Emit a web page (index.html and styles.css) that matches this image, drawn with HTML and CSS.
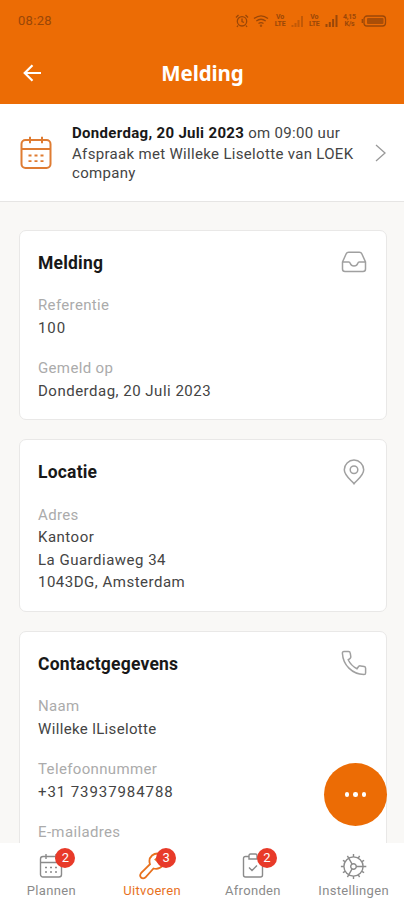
FILE: index.html
```
<!DOCTYPE html>
<html lang="nl">
<head>
<meta charset="utf-8">
<meta name="viewport" content="width=device-width, initial-scale=1">
<title>Melding</title>
<link rel="stylesheet" href="styles.css">
</head>
<body>
<div class="app">
  <header class="top">
    <div class="status">
      <span class="clock">08:28</span>
      <div class="indicators">
        <svg width="14" height="14" viewBox="0 0 14 14"><circle cx="7" cy="7.3" r="4.7"/><path d="M7 4.500v3l2 1M1 3.500 3.500 1M13 3.500 10.500 1M3 11.500 2 13M11 11.500 12 13"/></svg>
        <svg width="16" height="14" viewBox="0 0 16 14"><path d="M1 4.500Q8-.8 15 4.500M3.300 7Q8 3.500 12.700 7M5.500 9.500Q8 7.600 10.500 9.500"/><circle class="solid" cx="8" cy="11.800" r="1.200"/></svg>
        <span class="lte">Vo<br>LTE</span>
        <svg class="dim" width="13" height="12" viewBox="0 0 13 12"><path class="bars" d="M1.500 12V10M4.500 12V8M7.500 12V5M11 12V1"/></svg>
        <span class="lte">Vo<br>LTE</span>
        <svg width="13" height="12" viewBox="0 0 13 12"><path class="bars" d="M1.500 12V9M4.800 12V7M8.100 12V4M11.500 12V0"/></svg>
        <span class="lte rate">4,15<br>K/s</span>
        <svg width="26" height="12" viewBox="0 0 26 12"><rect x="3" y="1" width="21.500" height="10" rx="3"/><path d="M1.300 4v4"/><rect class="solid" x="6" y="3" width="16.500" height="6" rx="1"/></svg>
      </div>
    </div>
    <div class="bar">
      <svg class="back" width="20" height="18" viewBox="0 0 20 18"><path d="M18 9H2M9.500 1.200 1.700 9l7.800 7.800"/></svg>
      <h1>Melding</h1>
    </div>
  </header>

  <section class="appointment">
    <svg class="calendar" width="32" height="34" viewBox="0 0 32 34"><rect x="1.500" y="4" width="29" height="28" rx="4"/><path d="M1.500 13h29M10 .8v6.400M22 .8v6.400"/><path class="dots" d="M8.500 19.500h3M14.500 19.500h3M20.500 19.500h3M8.500 25.200h3M14.500 25.200h3M20.500 25.200h3"/></svg>
    <div class="summary">
      <div class="when"><b>Donderdag, 20 Juli 2023</b> <span>om 09:00 uur</span></div>
      <div class="with">Afspraak met Willeke Liselotte van LOEK</div>
      <div class="company">company</div>
    </div>
    <svg class="chevron" width="11" height="18" viewBox="0 0 11 18"><path d="m1 1 9 8-9 8"/></svg>
  </section>

  <main class="content">
    <article class="card">
      <div class="head"><h2>Melding</h2>
        <svg class="icon" width="26" height="22" viewBox="0 0 26 22"><path d="M1.500 11 5.200 2.800Q5.900 1.200 7.600 1.200h10.800q1.700 0 2.400 1.600L24.500 11v7q0 2.500-2.500 2.500H4q-2.500 0-2.500-2.500zM1.500 11h6.300q1 0 1.500 1.500.8 2.500 3.700 2.500t3.700-2.500q.5-1.500 1.500-1.500h6.300"/></svg>
      </div>
      <dl><dt>Referentie</dt><dd class="digits">100</dd></dl>
      <dl><dt>Gemeld op</dt><dd>Donderdag, 20 Juli 2023</dd></dl>
    </article>
    <article class="card">
      <div class="head"><h2>Locatie</h2>
        <svg class="icon pin" width="22" height="26" viewBox="0 0 22 26"><path d="M11 24.700C9 21.800 1.300 17 1.300 10.800a9.700 9.700 0 0 1 19.400 0C20.700 17 13 21.800 11 24.700z"/><circle cx="11" cy="10.800" r="3.800"/></svg>
      </div>
      <dl><dt>Adres</dt><dd>Kantoor</dd><dd>La Guardiaweg 34</dd><dd>1043DG, Amsterdam</dd></dl>
    </article>
    <article class="card">
      <div class="head"><h2>Contactgegevens</h2>
        <svg class="icon" width="26" height="26" viewBox="0 0 26 26"><path d="M3 1.500H7.500Q9 1.500 9.200 2.900L9.800 6.500Q10 7.800 8.900 8.600L7.200 9.800Q10 15.800 16 18.700L17.400 16.700Q18.200 15.700 19.500 15.900L23.200 16.500Q24.600 16.800 24.600 18.200V23Q24.600 24.600 23 24.600C11 24 2 15 1.400 3.200Q1.300 1.500 3 1.500z"/></svg>
      </div>
      <dl><dt>Naam</dt><dd class="name">Willeke lLiselotte</dd></dl>
      <dl><dt>Telefoonnummer</dt><dd class="digits">+31 73937984788</dd></dl>
      <dl><dt>E-mailadres</dt></dl>
    </article>
  </main>

  <button class="fab" aria-label="Meer"><i></i><i></i><i></i></button>

  <nav class="tabs">
    <a class="tab"><span class="glyph"><svg width="24" height="26" viewBox="0 0 24 26"><rect x="1.500" y="3.500" width="21" height="20.500" rx="2.500"/><path d="M1.500 9.500h21M7 1v5M17 1v5"/><path class="dots" d="M6 14.500h2M11 14.500h2M16 14.500h2M6 19h2M11 19h2M16 19h2"/></svg><em>2</em></span><span>Plannen</span></a>
    <a class="tab active"><span class="glyph"><svg width="26" height="28" viewBox="0 0 26 28"><path d="M22.500 2.300Q17 .3 13 3.500 9.200 7 11 12.200L2 21.200Q.3 23.500 2 25.500 4 27.300 6.300 25.500L14.500 16.500Q20 18 23.500 13.500 25.500 10 24.500 6.500L20 10.500 16.500 7.500z"/></svg><em>3</em></span><span>Uitvoeren</span></a>
    <a class="tab"><span class="glyph"><svg width="22" height="26" viewBox="0 0 22 26"><path d="M7 3.500H3.500Q1.500 3.500 1.500 5.500V22q0 2 2 2h15q2 0 2-2V5.500q0-2-2-2H15M7 2.500q0-1.500 1.500-1.500h5Q15 1 15 2.500V6H7zM7 14.500l3 3 5-5"/></svg><em>2</em></span><span>Afronden</span></a>
    <a class="tab"><span class="glyph"><svg width="27" height="27" viewBox="-13.500 -13.500 27 27"><circle r="9.600"/><circle r="2.800"/><path d="M2.800 0h10M-1.400-2.400-4.800-8.300M-1.400 2.400-4.800 8.300"/><path d="M0-9.600V-12.600M0 9.600V12.600M-9.600 0H-12.600M4.800-8.300l1.300-2.300M8.300-4.800l2.300-1.300M8.300 4.800l2.300 1.300M4.800 8.300l1.300 2.300M-4.800 8.300l-1.300 2.300M-8.300 4.800l-2.300 1.300M-8.300-4.800l-2.300-1.300M-4.800-8.300l-1.300-2.300"/></svg></span><span>Instellingen</span></a>
  </nav>
</div>
</body>
</html>
```
FILE: styles.css
```
* { box-sizing: border-box; }
body, h1, h2, dl, dd { margin: 0; }
body { font-family: Roboto, sans-serif; background: #f9f8f6; color: #444; }
svg { fill: none; stroke: currentColor; flex: none; display: block; }
.app { position: relative; height: 900px; overflow: hidden; display: flex; flex-direction: column; }

.top { height: 104px; flex: none; background: #ec6c05; color: #fff; }
.status { height: 42px; padding: 0 17px 0 18px; display: flex; align-items: center; justify-content: space-between; color: #9a4708; }
.clock { font-size: 13px; line-height: 18px; letter-spacing: .3px; }
.indicators { display: flex; align-items: center; gap: 4.600px; height: 18px; }
.indicators svg { stroke-width: 1.300; }
.indicators .bars { stroke-width: 2; }
.indicators .solid { fill: currentColor; stroke: none; opacity: .8; }
.indicators .dim { opacity: .5; }
.lte { font-weight: bold; font-size: 7px; line-height: 7px; width: 12px; text-align: center; letter-spacing: -.2px; }
.rate { width: 14px; }
.bar { display: flex; align-items: center; height: 62px; padding: 0 0 0 23px; }
.back { stroke-width: 2.200; }
.bar h1 { flex: 1; padding-right: 42px; text-align: center; font: bold 20.500px/30px "Noto Sans", sans-serif; letter-spacing: -.1px; }

.appointment { height: 98px; flex: none; background: #fff; border-bottom: 1px solid #e6e5e4; display: flex; align-items: center; padding: 0 18px 0 20px; }
.calendar { stroke: #df7c32; stroke-width: 2; }
.calendar .dots { stroke-width: 1.800; }
.summary { flex: 1; padding: 0 0 1px 20px; font-size: 15px; line-height: 20px; letter-spacing: .32px; white-space: nowrap; }
.when { line-height: 22px; }
.when b { color: #181818; }
.with { line-height: 20px; }
.company { line-height: 18px; }
.chevron { stroke: #999; stroke-width: 1.300; }

.content { flex: 1; min-height: 0; overflow: hidden; padding: 27.500px 17.500px 0 18.500px; display: flex; flex-direction: column; gap: 19px; }
.card { flex: none; background: #fff; border: 1px solid #e9e8e7; border-radius: 7px; padding: 17px 18.500px; }
.head { display: flex; justify-content: space-between; align-items: flex-start; height: 30px; margin-bottom: 16.500px; }
.head h2 { font-weight: bold; font-size: 17.500px; line-height: 31px; letter-spacing: .2px; color: #181818; }
.icon { stroke: #a0a0a0; stroke-width: 1.500; align-self: center; margin-bottom: 1px; }
.pin { margin-right: 2px; }
dl + dl { margin-top: 18px; }
dt, dd { font-size: 15px; line-height: 22.500px; letter-spacing: .5px; white-space: nowrap; }
dt { color: #ababab; letter-spacing: .35px; }
.name { letter-spacing: .35px; }
.digits { letter-spacing: .92px; }

.fab { position: absolute; left: 324px; top: 763px; width: 63px; height: 63px; border: 0; border-radius: 50%; background: #ec6c05; display: flex; align-items: center; justify-content: center; gap: 4px; padding: 0; }
.fab i { width: 4.500px; height: 4.500px; border-radius: 50%; background: #fff; }

.tabs { flex: none; height: 57px; background: #fff; display: grid; grid-template-columns: repeat(4, 1fr); padding-left: 1px; }
.tab { display: flex; flex-direction: column; align-items: center; font-size: 13px; line-height: 20px; letter-spacing: .33px; color: #8b8b8b; padding-top: 8px; white-space: nowrap; }
.tab.active { color: #e8711e; }
.glyph { position: relative; height: 30px; display: flex; align-items: center; }
.glyph svg { stroke-width: 1.400; }
.active svg { stroke-width: 1.800; }
.glyph em { position: absolute; left: 50%; top: -3px; margin-left: 4px; width: 20px; height: 20px; border-radius: 50%; background: #e83a29; color: #fff; font-style: normal; font-size: 13px; line-height: 20px; letter-spacing: 0; text-align: center; }
```
